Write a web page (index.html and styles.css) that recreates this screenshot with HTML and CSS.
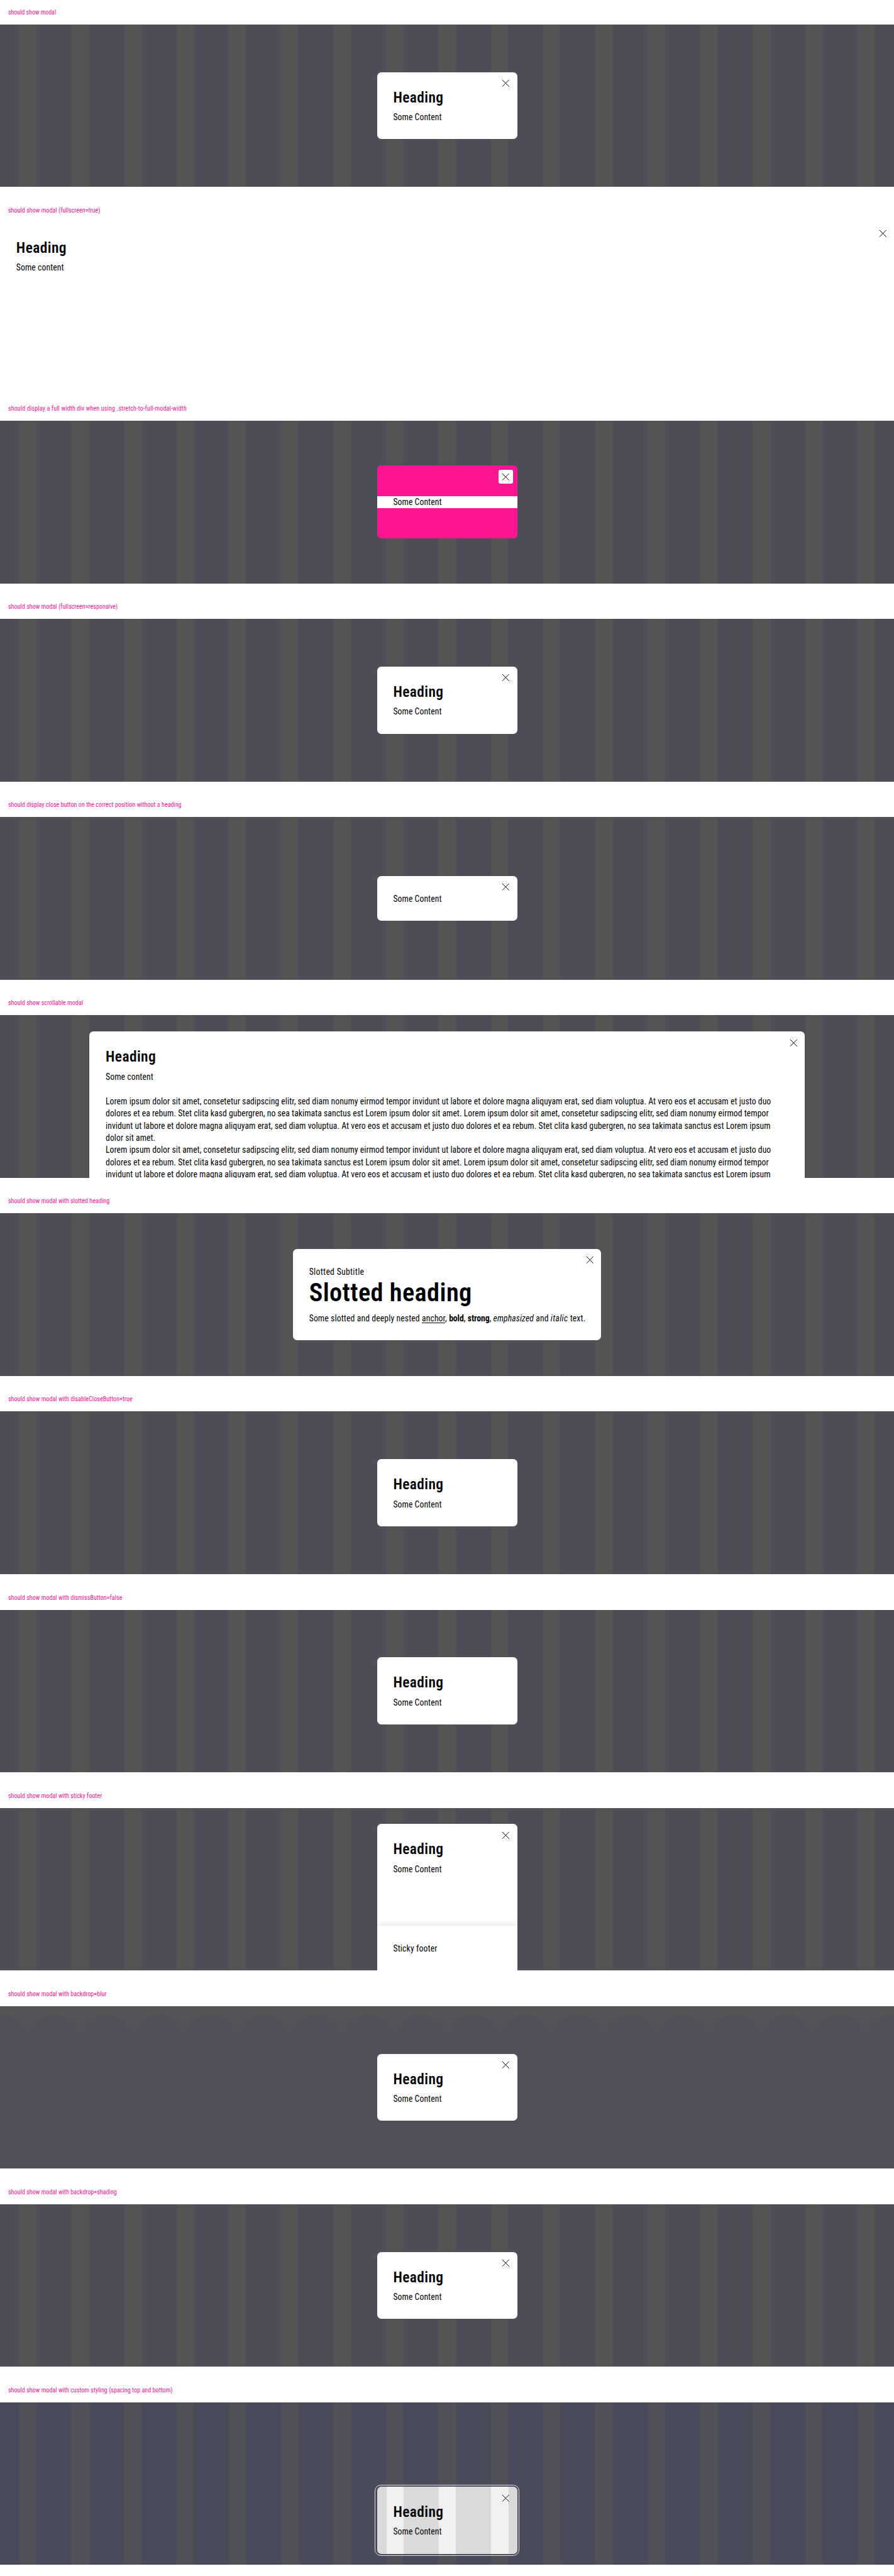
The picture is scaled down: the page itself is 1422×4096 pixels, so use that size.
FILE: index.html
```html
<!DOCTYPE html>
<html lang="en">
<head>
<meta charset="utf-8">
<title>Modal</title>
<link rel="stylesheet" href="styles.css">
</head>
<body>
<svg width="0" height="0" class="defs"><symbol id="close" viewBox="0 0 28 28"><path d="M7.3 7.3 20.7 20.7M20.7 7.3 7.3 20.7" fill="none" stroke="#010205" stroke-width="1.2"/></symbol></svg>
<main class="page">
  <section class="case"><p class="label label-short">should show modal</p>
    <div class="stage"><div class="modal"><button class="close"><svg><use href="#close"/></svg></button><h2>Heading</h2><p>Some Content</p></div></div></section>
  <section class="case"><p class="label">should show modal (fullscreen=true)</p>
    <div class="stage plain"><div class="modal fullscreen"><button class="close"><svg><use href="#close"/></svg></button><h2>Heading</h2><p>Some content</p></div></div></section>
  <section class="case"><p class="label label-long">should display a full width div when using .stretch-to-full-modal-width</p>
    <div class="stage"><div class="modal stretch"><button class="close"><svg><use href="#close"/></svg></button><p>Some Content</p></div></div></section>
  <section class="case"><p class="label">should show modal (fullscreen=responsive)</p>
    <div class="stage"><div class="modal"><button class="close"><svg><use href="#close"/></svg></button><h2>Heading</h2><p>Some Content</p></div></div></section>
  <section class="case"><p class="label">should display close button on the correct position without a heading</p>
    <div class="stage"><div class="modal"><button class="close"><svg><use href="#close"/></svg></button><p>Some Content</p></div></div></section>
  <section class="case"><p class="label">should show scrollable modal</p>
    <div class="stage top"><div class="modal wide"><button class="close"><svg><use href="#close"/></svg></button><h2>Heading</h2><p>Some content</p>
      <p class="lorem"><br>Lorem ipsum dolor sit amet, consetetur sadipscing elitr, sed diam nonumy eirmod tempor invidunt ut labore et dolore magna aliquyam erat, sed diam voluptua. At vero eos et accusam et justo duo<br>dolores et ea rebum. Stet clita kasd gubergren, no sea takimata sanctus est Lorem ipsum dolor sit amet. Lorem ipsum dolor sit amet, consetetur sadipscing elitr, sed diam nonumy eirmod tempor<br>invidunt ut labore et dolore magna aliquyam erat, sed diam voluptua. At vero eos et accusam et justo duo dolores et ea rebum. Stet clita kasd gubergren, no sea takimata sanctus est Lorem ipsum<br>dolor sit amet.<br>Lorem ipsum dolor sit amet, consetetur sadipscing elitr, sed diam nonumy eirmod tempor invidunt ut labore et dolore magna aliquyam erat, sed diam voluptua. At vero eos et accusam et justo duo<br>dolores et ea rebum. Stet clita kasd gubergren, no sea takimata sanctus est Lorem ipsum dolor sit amet. Lorem ipsum dolor sit amet, consetetur sadipscing elitr, sed diam nonumy eirmod tempor<br>invidunt ut labore et dolore magna aliquyam erat, sed diam voluptua. At vero eos et accusam et justo duo dolores et ea rebum. Stet clita kasd gubergren, no sea takimata sanctus est Lorem ipsum</p></div></div></section>
  <section class="case"><p class="label">should show modal with slotted heading</p>
    <div class="stage"><div class="modal slotted"><button class="close"><svg><use href="#close"/></svg></button><p class="subtitle">Slotted Subtitle</p><h1>Slotted heading</h1><p class="rich">Some slotted and deeply nested <a>anchor</a>, <b>bold</b>, <strong>strong</strong>, <em>emphasized</em> and <i>italic</i> text.</p></div></div></section>
  <section class="case"><p class="label">should show modal with disableCloseButton=true</p>
    <div class="stage"><div class="modal"><h2>Heading</h2><p>Some Content</p></div></div></section>
  <section class="case"><p class="label">should show modal with dismissButton=false</p>
    <div class="stage"><div class="modal"><h2>Heading</h2><p>Some Content</p></div></div></section>
  <section class="case"><p class="label">should show modal with sticky footer</p>
    <div class="stage top"><div class="modal sticky"><button class="close"><svg><use href="#close"/></svg></button><h2>Heading</h2><p>Some Content</p><footer>Sticky footer</footer></div></div></section>
  <section class="case"><p class="label">should show modal with backdrop=blur</p>
    <div class="stage blur"><div class="modal"><button class="close"><svg><use href="#close"/></svg></button><h2>Heading</h2><p>Some Content</p></div></div></section>
  <section class="case"><p class="label">should show modal with backdrop=shading</p>
    <div class="stage"><div class="modal"><button class="close"><svg><use href="#close"/></svg></button><h2>Heading</h2><p>Some Content</p></div></div></section>
  <section class="case"><p class="label">should show modal with custom styling (spacing top and bottom)</p>
    <div class="stage custom"><div class="modal glass"><button class="close"><svg><use href="#close"/></svg></button><h2>Heading</h2><p>Some Content</p></div></div></section>
</main>
</body>
</html>
```
FILE: styles.css
```css
* { box-sizing: border-box; }
html { background: #fff; overflow: hidden; }
body { margin: 0; overflow: hidden; }
h1, h2, p { margin: 0; }
.defs { position: absolute; }

.page {
  zoom: 0.808;
  width: 1760px;
  height: 5069px;
  overflow: hidden;
  font: 400 17px/24px "Roboto Condensed", Roboto, sans-serif;
  letter-spacing: 0.08px;
  color: #010205;
}
.case { padding-bottom: 22px; }
.label {
  height: 48px;
  padding: 1px 16px 0;
  font-size: 12.5px;
  line-height: 48px;
  letter-spacing: 0.03px;
  color: #ff1493;
  white-space: nowrap;
}
.label-short { letter-spacing: -0.08px; }
.label-long { letter-spacing: 0.16px; }

.stage {
  display: flex;
  justify-content: center;
  align-items: center;
  height: 320px;
  overflow: hidden;
  background: repeating-linear-gradient(90deg, #535555 38px 72px, #4e4e58 72px 141.125px);
}
.stage.plain { background: #fff; align-items: stretch; }
.stage.top { align-items: flex-start; padding-top: 32px; }
.stage.blur {
  background:
    radial-gradient(ellipse 50px 42px at 50% 100%, #4f4f59 80%, rgba(79, 79, 89, 0) 100%) 55px 0 / 103.125px 56px repeat-x,
    linear-gradient(#535555, #515356 30px, #505157 56px, #4f4f59 60px);
}
.stage.custom {
  align-items: flex-end;
  padding-bottom: 22px;
  background: repeating-linear-gradient(90deg, #515058 38px 72px, #4a4b5a 72px 141.125px);
}

.modal {
  position: relative;
  flex: none;
  width: 276px;
  padding: 32px;
  border-radius: 8px;
  background: #fff;
}
.modal p { padding-top: 1px; margin-bottom: -1px; }
.close {
  position: absolute;
  top: 8px;
  right: 8px;
  width: 28px;
  height: 28px;
  padding: 0;
  border: 0;
  border-radius: 4px;
  background: none;
}
.close svg { display: block; width: 28px; height: 28px; }
h2 {
  margin-bottom: 8px;
  font-size: 29px;
  font-weight: 600;
  line-height: 36px;
  letter-spacing: 0.5px;
}
h1 {
  padding-top: 1px;
  margin-bottom: 7px;
  font-size: 50px;
  font-weight: 600;
  line-height: 60px;
  letter-spacing: 0.5px;
}

.fullscreen { width: 100%; border-radius: 0; }
.stretch { padding: 60px 0; background: #ff1493; }
.stretch p { height: 24px; padding: 1px 32px 0; margin: 0; background: #fff; }
.stretch .close { background: #fff; }

.wide { width: 1408px; white-space: nowrap; }
.wide h2, .sticky h2 { margin-bottom: 9px; }
.lorem { letter-spacing: 0.045px; }

.slotted { width: 607px; white-space: nowrap; }
.subtitle { letter-spacing: 0.36px; }
.rich { letter-spacing: 0.13px; }
.rich a { text-decoration: underline; text-underline-offset: 2px; }
.rich b, .rich strong { letter-spacing: -0.1px; }
.rich i { letter-spacing: 0.4px; }

.sticky { height: 320px; display: flex; flex-direction: column; padding-bottom: 0; }
.sticky footer {
  margin: 99px -32px 0;
  padding: 33px 32px;
  flex: 1;
  background: #fff;
  letter-spacing: 0.17px;
  box-shadow: 0 -5px 10px rgba(0, 0, 0, 0.08);
  clip-path: inset(-20px 0 0 0);
}

.glass { background: repeating-linear-gradient(90deg, #f1f1f1 18px 52px, #dadada 52px 121.125px); }
/* detached ring around the panel */
.glass::after {
  content: "";
  position: absolute;
  inset: -4px;
  border: 2px solid #e0e0e4;
  border-radius: 12px;
}
```
